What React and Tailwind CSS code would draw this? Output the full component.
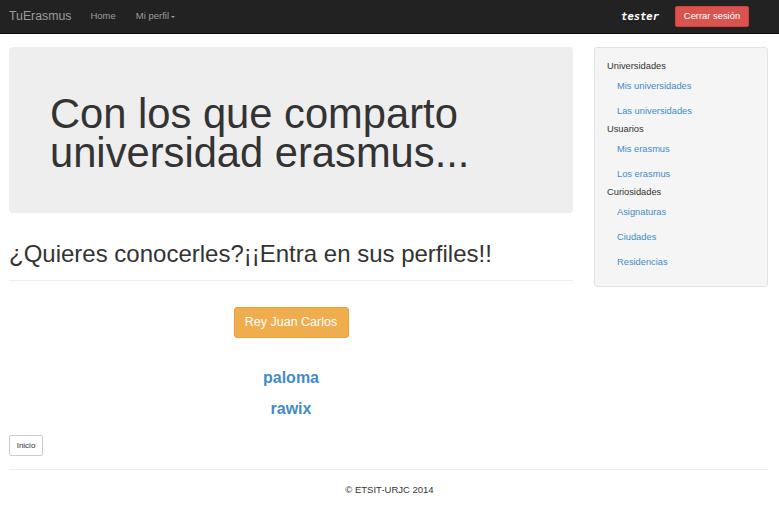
import React from "react";

const sideMenu = [
  { title: "Universidades", links: ["Mis universidades", "Las universidades"] },
  { title: "Usuarios", links: ["Mis erasmus", "Los erasmus"] },
  { title: "Curiosidades", links: ["Asignaturas", "Ciudades", "Residencias"] },
];

const erasmus = ["paloma", "rawix"];

export default function App() {
  return (
    <div className="min-h-[515px] bg-white text-[#333]" style={{ fontFamily: '"Liberation Sans", Arial, sans-serif' }}>
      {/* navbar */}
      <div className="flex h-[34px] items-center border-b border-[#080808] bg-[#222] pl-[9px] pr-[30px]">
        <span className="text-[12.3px] text-[#9d9d9d]">TuErasmus</span>
        <span className="ml-[19px] text-[9.5px] text-[#9d9d9d]">Home</span>
        <span className="ml-[20px] flex items-center text-[9.5px] text-[#9d9d9d]">
          Mi perfil
          <span className="ml-[2px] mt-[1px] h-0 w-0 border-x-[2.5px] border-t-[2.5px] border-x-transparent border-t-[#9d9d9d]" />
        </span>
        <div className="flex-1" />
        <span
          className="mr-[16px] text-[10.5px] font-bold italic text-white"
          style={{ fontFamily: '"DejaVu Sans Mono", monospace' }}
        >
          tester
        </span>
        <button className="h-[21px] w-[74px] rounded-[2px] border border-[#d43f3a] bg-[#d9534f] text-[9.4px] text-white">
          Cerrar sesión
        </button>
      </div>

      <div className="flex gap-[21px] pl-[9px] pr-[11px] pt-[13px]">
        {/* main column */}
        <div className="w-[564px]">
          <div className="h-[166px] rounded-[4px] bg-[#eee] pl-[41px] pt-[47px]">
            <h1 className="text-[41.7px] leading-[39px] text-[#333]">
              Con los que comparto
              <br />
              universidad erasmus...
            </h1>
          </div>

          <h2 className="mt-[28px] text-[24px] leading-[26px] text-[#333]">
            ¿Quieres conocerles?¡¡Entra en sus perfiles!!
          </h2>
          <div className="mt-[13px] border-t border-[#eee]" />

          <div className="flex flex-col items-center">
            <button className="mt-[26px] h-[31px] w-[115px] rounded-[3px] border border-[#eea236] bg-[#f0ad4e] text-[12.5px] text-white">
              Rey Juan Carlos
            </button>
            <div className="mt-[31px] flex flex-col items-center gap-[13px]">
              {erasmus.map((u) => (
                <a key={u} className="text-[16px] font-bold leading-[18px] text-[#428bca]">
                  {u}
                </a>
              ))}
            </div>
          </div>

          <button className="mt-[17px] h-[21px] w-[34px] rounded-[2px] border border-[#ccc] bg-white text-[8px] text-[#333]">
            Inicio
          </button>
        </div>

        {/* sidebar */}
        <div className="h-[240px] w-[174px] rounded-[3px] border border-[#e3e3e3] bg-[#f5f5f5] pl-[12px] pt-[12px]">
          {sideMenu.map((g) => (
            <div key={g.title}>
              <div className="h-[13px] text-[9.3px] leading-[13px] text-[#333]">{g.title}</div>
              {g.links.map((l) => (
                <a key={l} className="block pb-[6.5px] pl-[10px] pt-[7.5px] text-[9.3px] leading-[11px] text-[#428bca]">
                  {l}
                </a>
              ))}
            </div>
          ))}
        </div>
      </div>

      {/* footer */}
      <div className="ml-[9px] mr-[11px] mt-[13px] border-t border-[#eee]" />
      <div className="pt-[13px] text-center text-[9.5px] text-[#333]">© ETSIT-URJC 2014</div>
    </div>
  );
}
